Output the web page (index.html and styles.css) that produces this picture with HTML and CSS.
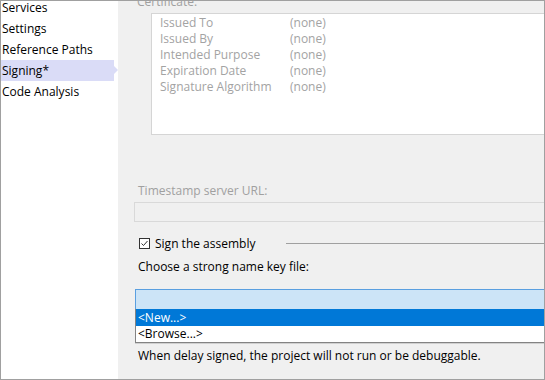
FILE: index.html
```html
<!DOCTYPE html>
<html lang="en">
<head>
<meta charset="utf-8">
<title>Signing</title>
<link rel="stylesheet" href="styles.css">
</head>
<body>
<div class="window">
  <nav class="nav">
    <div class="nav-item">Services</div>
    <div class="nav-item">Settings</div>
    <div class="nav-item">Reference Paths</div>
    <div class="nav-item selected">Signing*</div>
    <div class="nav-item">Code Analysis</div>
  </nav>
  <main class="panel">
    <div class="cert-label">Certificate:</div>
    <div class="cert-box">
      <div class="cert-grid">
        <span>Issued To</span><span>(none)</span>
        <span>Issued By</span><span>(none)</span>
        <span>Intended Purpose</span><span>(none)</span>
        <span>Expiration Date</span><span>(none)</span>
        <span>Signature Algorithm</span><span>(none)</span>
      </div>
    </div>
    <div class="label disabled ts-label">Timestamp server URL:</div>
    <div class="textbox"></div>
    <div class="check-row">
      <svg class="checkbox" width="11" height="11" viewBox="0 0 11 11">
        <rect x="0.5" y="0.5" width="10" height="10" fill="#ffffff" stroke="#333333"/>
        <path d="M2.5 5.5 L4.5 7.5 L8.5 3" fill="none" stroke="#333333" stroke-width="1"/>
      </svg>
      <span class="check-text">Sign the assembly</span>
      <div class="rule"></div>
    </div>
    <div class="label choose-label">Choose a strong name key file:</div>
    <div class="combo">
      <div class="combo-field"></div>
      <div class="combo-list">
        <div class="opt active">&lt;New...&gt;</div>
        <div class="opt">&lt;Browse...&gt;</div>
      </div>
    </div>
    <div class="label note">When delay signed, the project will not run or be debuggable.</div>
  </main>
</div>
</body>
</html>
```
FILE: styles.css
```css
html, body {
  margin: 0;
  padding: 0;
  background: #ffffff;
}

.window {
  box-sizing: border-box;
  width: 545px;
  height: 380px;
  display: flex;
  border: 1px solid #a0a0a0;
  overflow: hidden;
  font-family: "Open Sans", "Noto Sans", sans-serif;
  font-size: 12px;
  color: #000000;
}

.nav {
  width: 117px;
  flex: none;
  background: #ffffff;
  overflow: hidden;
  padding-top: 0;
}

.nav-item {
  position: relative;
  height: 21px;
  line-height: 21px;
  padding-left: 1px;
  width: 112px;
  white-space: nowrap;
}

.nav-item:first-child {
  margin-top: -4px;
}

.nav-item.selected {
  background: #dadcf7;
}

.nav-item.selected::after {
  content: "";
  position: absolute;
  right: -4px;
  top: 6px;
  border-left: 4px solid #dadcf7;
  border-top: 4px solid transparent;
  border-bottom: 4px solid transparent;
}

.panel {
  flex: 1;
  background: #f0f0f0;
  overflow: hidden;
  padding-left: 16px;
}

.label {
  line-height: 16px;
  padding-left: 4px;
  white-space: nowrap;
}

.disabled {
  color: #a0a0a0;
}

.cert-label {
  margin-top: -7px;
  line-height: 16px;
  padding-left: 3px;
  color: #a0a0a0;
}

.cert-box {
  margin-top: 3px;
  margin-left: 17px;
  margin-right: -4px;
  height: 119px;
  background: #ffffff;
  border: 1px solid #d5d5d5;
  padding: 1px 0 0 8px;
  box-sizing: content-box;
}

.cert-grid {
  display: grid;
  grid-template-columns: 130px auto;
  justify-content: start;
  line-height: 16px;
  color: #a3a3a3;
}

.ts-label {
  margin-top: 48px;
}

.textbox {
  margin-top: 3px;
  margin-right: -10px;
  height: 18px;
  border: 1px solid #d9d9d9;
  background: #f0f0f0;
}

.check-row {
  display: flex;
  align-items: center;
  height: 16px;
  margin-top: 13px;
}

.checkbox {
  margin-left: 5px;
  flex: none;
}

.check-text {
  margin-left: 5px;
  white-space: nowrap;
}

.rule {
  flex: 1;
  height: 1px;
  background: #a0a0a0;
  margin-left: 31px;
  margin-right: -10px;
}

.choose-label {
  margin-top: 8px;
}

.combo {
  margin-top: 14px;
  margin-left: 1px;
  margin-right: -10px;
}

.combo-field {
  height: 19px;
  border-top: 1px solid #5a9fe0;
  border-left: 1px solid #5a9fe0;
  background: #cce4f7;
}

.combo-list {
  border-left: 1px solid #838383;
  border-bottom: 1px solid #838383;
  background: #ffffff;
  box-shadow: 0 1px 0 #d0d0d0;
}

.opt {
  height: 16px;
  line-height: 16px;
  padding-left: 2px;
  white-space: nowrap;
}

.opt.active {
  height: 17px;
  line-height: 17px;
  background: #0078d7;
  color: #ffffff;
}

.note {
  margin-top: 5px;
}
```
